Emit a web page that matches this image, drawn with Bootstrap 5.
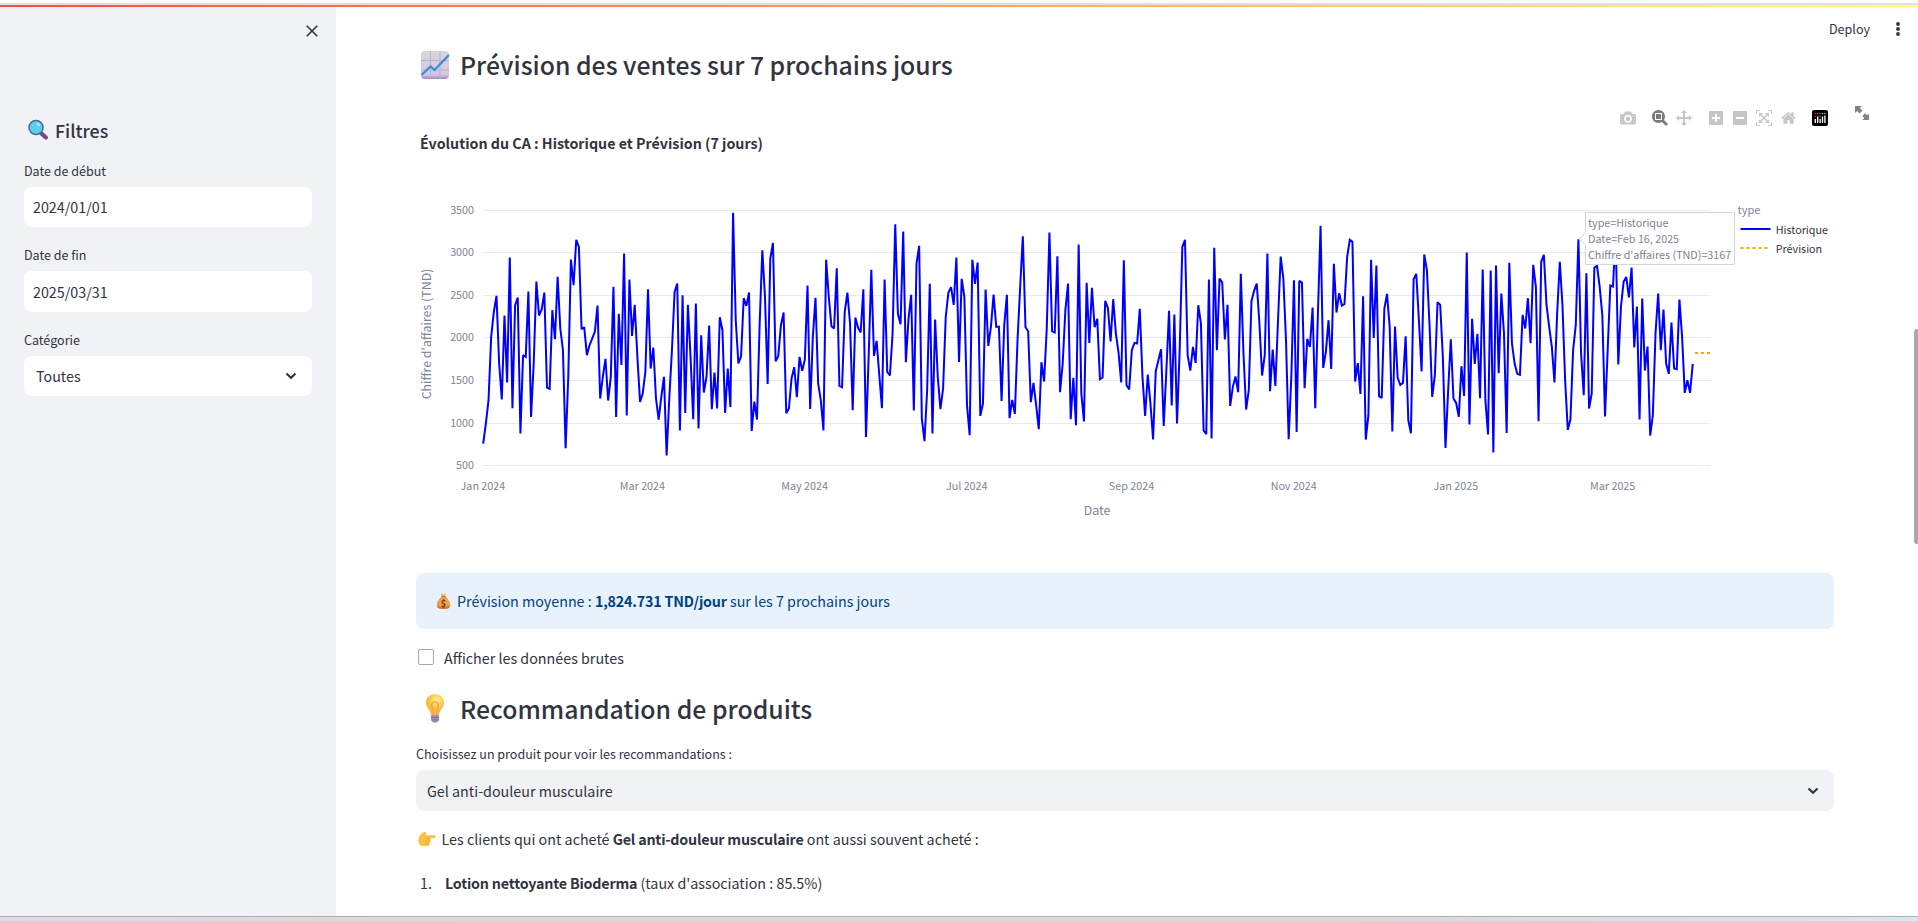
<!DOCTYPE html>
<html lang="fr">
<head>
<meta charset="utf-8">
<title>Prévision des ventes</title>
<link href="https://cdn.jsdelivr.net/npm/bootstrap@5.3.0/dist/css/bootstrap.min.css" rel="stylesheet">
<style>
  :root { --ink:#31333f; --panel:#f0f2f6; --axis:#808495; }
  body { font-family:"Noto Sans CJK JP","Noto Sans",sans-serif; font-size:14.3px; line-height:24px; color:var(--ink); height:921px; background:#fff; }
  .edge-top { height:7px; flex:none; background:linear-gradient(#fff 3px,#e0e0e0 3px,#e0e0e0 5px,transparent 5px),linear-gradient(90deg,#ff4b4b,#fffd80); }
  .edge-bottom { height:5px; flex:none; border-top:1px solid #adafb3; background:linear-gradient(90deg,#dcdce9,#dadada 25%,#d8dadb 70%,#dce6ef); }
  .side { width:336px; flex:none; background:var(--panel); padding:0 24px; }
  .side-top { height:111px; padding-top:18px; margin-right:-6px; }
  .content-col { padding:39px 84px 0 80px; min-width:0; }
  .side-title { font-size:17.8px; font-weight:500; gap:7px; margin-bottom:19px; padding-left:4px; }
  .lbl { font-size:12.52px; line-height:20px; }
  .field { height:40px; border-radius:8px; background:#fff; margin-top:6px; padding:0 9px; }
  .field.tall { height:41px; }
  .field.pick { padding:0 15px 0 12px; }
  .side .lbl + .field { margin-bottom:18px; }
  .title { font-size:24.8px; line-height:36px; font-weight:500; margin:0; }
  .title svg { width:36px; height:30px; margin-right:8px; flex:none; }
  .chart { height:491px; }
  .chart text { fill:var(--axis); }
  .chart text.dark { fill:var(--ink); }
  .modebar { top:28px; right:-35px; height:16px; }
  .modebar svg { display:block; fill:#444; opacity:.3; height:16px; }
  .modebar svg.on { opacity:.7; }
  .modebar svg.full { opacity:1; }
  .note { height:56px; border-radius:8px; background:#e8f2fc; color:#004280; padding:0 20px; }
  .tick { width:16px; height:16px; border:1px solid #a5a7ae; border-radius:2px; background:#fff; margin:0 10px 3px 2px; }
  .content-col .field { background:var(--panel); height:41px; margin-top:6px; padding-left:11px; }
  .topmenu { top:17px; right:18px; font-size:12.55px; }
  .thumb { right:0; top:329px; width:4px; height:215px; background:#a9a9ad; border-radius:3px 0 0 3px; }
  strong { font-weight:700; letter-spacing:-.21px; }
</style>
</head>
<body class="d-flex flex-column overflow-hidden position-relative">
<div class="edge-top"></div>
<div class="d-flex flex-grow-1 overflow-hidden">
  <aside class="side">
    <div class="side-top d-flex justify-content-end">
      <svg width="12" height="12" viewBox="0 0 12 12" stroke="#31333f" stroke-width="1.600" fill="none"><path d="M.7.7l10.600 10.600M11.300.7L.7 11.300"/></svg>
    </div>
    <div class="side-title d-flex align-items-center">
      <svg width="20" height="22" viewBox="0 0 20 22"><path d="M13.200 14.200l4.600 4.400" stroke="#7d4a86" stroke-width="4.200" stroke-linecap="round"/><circle cx="8" cy="8.500" r="7" fill="#60cdec" stroke="#3f6d9e" stroke-width="1.500"/><ellipse cx="10.500" cy="5.500" rx="1.400" ry="2.200" transform="rotate(-45 10.500 5.500)" fill="#9fe6f8"/></svg>
      <span>Filtres</span>
    </div>
    <div class="lbl" style="margin-top:19px">Date de début</div>
    <div class="field d-flex align-items-center">2024/01/01</div>
    <div class="lbl">Date de fin</div>
    <div class="field tall d-flex align-items-center">2025/03/31</div>
    <div class="lbl">Catégorie</div>
    <div class="field pick d-flex align-items-center justify-content-between"><span>Toutes</span>
      <svg width="12" height="8" viewBox="0 0 12 8" fill="none" stroke="#31333f" stroke-width="2.200"><path d="M1.500 1.500L6 5.800l4.500-4.300"/></svg></div>
  </aside>

  <main class="content-col flex-grow-1">
    <h2 class="title d-flex align-items-center">
      <svg viewBox="0 0 36 30"><defs><linearGradient id="g1" x2="0" y2="1"><stop stop-color="#d9d6df"/><stop offset=".85" stop-color="#d3c6e3"/><stop offset="1" stop-color="#a581c4"/></linearGradient></defs><rect x="5" y="2" width="28" height="28" rx="4" fill="url(#g1)"/><path d="M14.500 2v28M24 2v28M5 11.500h28M5 21h28" stroke="#b9b3c4" stroke-width="1"/><path d="M5.500 26l9-8.500 4 3.500L33 6" fill="none" stroke="#368fd8" stroke-width="2.200"/></svg>
      <span>Prévision des ventes sur 7 prochains jours</span>
    </h2>

    <section class="chart position-relative">
      <svg id="plot" class="d-block w-100 h-100" viewBox="416 82 1418 491" font-size="10.760">
        <text class="dark" x="420" y="149" font-size="14.250" font-weight="700">Évolution du CA : Historique et Prévision (7 jours)</text>
        <g id="grid" stroke="#e6eaf1"></g>
        <g id="xlabels" text-anchor="middle"></g>
        <text x="1097" y="515" text-anchor="middle" font-size="12.400">Date</text>
        <text transform="translate(430.500 334) rotate(-90)" text-anchor="middle" font-size="12.400">Chiffre d'affaires (TND)</text>
        <path id="history" fill="none" stroke="#00f" stroke-width="2" stroke-miterlimit="2"/>
        <path d="M1695 353H1711" stroke="orange" stroke-width="2" stroke-dasharray="3 3"/>
        <text x="1737.500" y="214" font-size="11">type</text>
        <path d="M1740.500 229H1770.500" stroke="#00f" stroke-width="2"/>
        <path d="M1740.500 248H1770.500" stroke="orange" stroke-width="2" stroke-dasharray="3 3"/>
        <text class="dark" x="1775.700" y="233.500">Historique</text>
        <text class="dark" x="1775.700" y="252.500">Prévision</text>
        <path d="M1579 239l6.500-6.500v-20h149v52h-149v-19.500z" fill="#fff" stroke="#d3d4d8"/>
        <text x="1588" y="226.800">type=Historique</text><text x="1588" y="242.800">Date=Feb 16, 2025</text><text x="1588" y="258.800">Chiffre d'affaires (TND)=3167</text>
      </svg>
      <div class="modebar position-absolute d-flex">
        <svg width="16" viewBox="0 0 1000 1000"><path transform="matrix(1 0 0 -1 0 850)" d="m500 450c-83 0-150-67-150-150 0-83 67-150 150-150 83 0 150 67 150 150 0 83-67 150-150 150z m400 150h-120c-16 0-34 13-39 29l-31 93c-6 15-23 28-40 28h-340c-16 0-34-13-39-28l-31-94c-6-15-23-28-40-28h-120c-55 0-100-45-100-100v-450c0-55 45-100 100-100h800c55 0 100 45 100 100v450c0 55-45 100-100 100z m-400-550c-138 0-250 112-250 250 0 138 112 250 250 250 138 0 250-112 250-250 0-138-112-250-250-250z m365 380c-19 0-35 16-35 35 0 19 16 35 35 35 19 0 35-16 35-35 0-19-16-35-35-35z"/></svg>
        <svg class="on ms-3" width="16" viewBox="0 0 1000 1000"><path transform="matrix(1 0 0 -1 0 850)" d="m1000-25l-250 251c40 63 63 138 63 218 0 224-182 406-407 406-224 0-406-182-406-406s183-406 407-406c80 0 155 22 218 62l250-250 125 125z m-812 250l0 438 437 0 0-438-437 0z m62 375l313 0 0-312-313 0 0 312z"/></svg>
        <svg class="ms-2" width="16" viewBox="0 0 1000 1000"><path transform="matrix(1 0 0 -1 0 850)" d="m1000 350l-187 188 0-125-250 0 0 250 125 0-188 187-187-187 125 0 0-250-250 0 0 125-188-188 186-187 0 125 252 0 0-250-125 0 187-188 188 188-125 0 0 250 250 0 0-126 187 188z"/></svg>
        <svg style="margin-left:17px" width="14" viewBox="0 0 875 1000"><path transform="matrix(1 0 0 -1 0 850)" d="m1 787l0-875 875 0 0 875-875 0z m687-500l-187 0 0-187-125 0 0 187-188 0 0 125 188 0 0 187 125 0 0-187 187 0 0-125z"/></svg>
        <svg style="margin-left:10px" width="14" viewBox="0 0 875 1000"><path transform="matrix(1 0 0 -1 0 850)" d="m0 788l0-876 875 0 0 876-875 0z m688-500l-500 0 0 125 500 0 0-125z"/></svg>
        <svg style="margin-left:9px" width="16" viewBox="0 0 1000 1000"><path transform="matrix(1 0 0 -1 0 850)" d="m250 850l-187 0-63 0 0-62 0-188 63 0 0 188 187 0 0 62z m688 0l-188 0 0-62 188 0 0-188 62 0 0 188 0 62-62 0z m-875-938l0 188-63 0 0-188 0-62 63 0 187 0 0 62-187 0z m875 188l0-188-188 0 0-62 188 0 62 0 0 62 0 188-62 0z m-125 188l-1 0-93-94-156 156 156 156 92-93 2 0 0 250-250 0 0-2 93-92-156-156-156 156 94 92 0 2-250 0 0-250 0 0 93 93 157-156-157-156-93 94 0 0 0-250 250 0 0 0-94 93 156 157 156-157-93-93 0 0 250 0 0 250z"/></svg>
        <svg style="margin-left:9px" width="15" viewBox="0 0 928.600 1000"><path transform="matrix(1 0 0 -1 0 850)" d="m786 296v-267q0-15-11-26t-25-10h-214v214h-143v-214h-214q-15 0-25 10t-11 26v267q0 1 0 2t0 2l321 264 321-264q1-1 1-4z m124 39l-34-41q-5-5-12-6h-2q-7 0-12 3l-386 322-386-322q-7-4-13-4-7 2-12 7l-35 41q-4 5-3 13t6 12l401 334q18 15 42 15t43-15l136-114v109q0 8 5 13t13 5h107q8 0 13-5t5-13v-227l122-102q5-5 6-12t-4-13z"/></svg>
        <svg class="full ms-3" width="16" viewBox="0 0 16 16"><rect width="16" height="16" rx="2" fill="#000"/><path d="M3.300 9v4M5.700 6.500v6.500M8.100 9v4M10.500 6.500v6.500M12.900 5.500v7.500" stroke="#fff" stroke-width="1.300"/><g fill="#e0306e"><circle cx="3.300" cy="3.500" r=".8"/><circle cx="3.300" cy="6.500" r=".8"/><circle cx="5.700" cy="3.500" r=".8"/></g><g fill="#b35b9a"><circle cx="8.100" cy="3.500" r=".8"/><circle cx="8.100" cy="6.500" r=".8"/></g><g fill="#6fc3e8"><circle cx="10.500" cy="3.500" r=".8"/><circle cx="12.900" cy="3.500" r=".8"/></g></svg>
        <svg class="full" style="margin:-5px 0 0 27px" width="14" viewBox="0 0 14 16"><path d="M0 1h7L4.900 3.100l2.500 2.500-2.800 2.800L2.100 5.900 0 8zM14 15H7.400l1.900-1.900-2-2 2.800-2.800 2 2L14 8.400z" fill="#7f838d"/></svg>
      </div>
    </section>

    <div class="note d-flex align-items-center">
      <svg width="15" height="18" viewBox="0 0 15 18" style="margin-right:6px"><path d="M5 1l2.500 1.200L10 1l-.8 3.800H5.800z" fill="#f3b64b"/><path d="M5.500 5h4c2.500 2 4.700 4.500 4.700 8 0 2.800-1.800 4-6.700 4S.8 15.800.8 13c0-3.500 2.200-6 4.700-8z" fill="#eda04b"/><path d="M1 13.500c.3 2.500 2 3.500 6.500 3.500s6.200-1 6.500-3.500c-2 1.700-11 1.700-13 0z" fill="#dd7136"/><path d="M5.200 4.800h4.600" stroke="#b3663a"/><text x="7.500" y="14.800" font-size="9" font-weight="700" text-anchor="middle" fill="#643a1e">$</text></svg>
      <span>Prévision moyenne : <strong>1,824.731 TND/jour</strong> sur les 7 prochains jours</span>
    </div>

    <div class="d-flex align-items-center" style="margin-top:17px;height:24px"><span class="tick"></span><span>Afficher les données brutes</span></div>

    <h2 class="title d-flex align-items-center" style="margin-top:20px">
      <svg viewBox="0 0 36 30"><defs><radialGradient id="g2" cx=".6" cy=".3"><stop stop-color="#fff0a0"/><stop offset=".6" stop-color="#fccf57"/><stop offset="1" stop-color="#f7b940"/></radialGradient></defs><path d="M19 1c5.200 0 9 3.800 9 8.700 0 5.300-4.500 6.500-5 12.300h-8c-.5-5.800-5-7-5-12.300C10 4.800 13.800 1 19 1z" fill="url(#g2)"/><path d="M17.500 22l-1-7.500a3.300 3.300 0 1 1 5 0l-1 7.500" fill="none" stroke="#f0a73c" stroke-width="1.200"/><path d="M15 22h8v5q-1.500 3-4 3t-4-3z" fill="#a990b8"/><path d="M15 24.500h8M15.500 27h7" stroke="#7d668f"/></svg>
      <span>Recommandation de produits</span>
    </h2>

    <div class="lbl" style="margin-top:18px">Choisissez un produit pour voir les recommandations :</div>
    <div class="field pick d-flex align-items-center justify-content-between"><span>Gel anti-douleur musculaire</span>
      <svg width="12" height="8" viewBox="0 0 12 8" fill="none" stroke="#31333f" stroke-width="2.200"><path d="M1.500 1.500L6 5.800l4.500-4.300"/></svg></div>

    <p class="mb-0 d-flex align-items-center" style="margin-top:16px">
      <svg width="18" height="16" viewBox="0 0 18 16" style="margin:0 5.500px 0 2px"><path d="M1 6c1-2.500 3.500-4 5-5 1.500-.8 3 .3 2 2L7.500 4.200H16c2 0 2 3 0 3h-4.500c1.800 0 1.700 2.800 0 2.800 1.400.3 1.200 2.600-.4 2.600.9.600.500 2.400-1.100 2.400H5c-3 0-4.600-2.500-4.600-5C.4 8.500.6 7 1 6z" fill="#fbc145"/><path d="M7.500 7.300h4M7.500 10.100h4M7.500 12.700H11" stroke="#e8952f" stroke-width=".8"/></svg>
      <span>Les clients qui ont acheté <strong>Gel anti-douleur musculaire</strong> ont aussi souvent acheté :</span></p>
    <div class="d-flex" style="margin-top:20px;padding-left:4px"><span style="width:25px">1.</span><span><strong>Lotion nettoyante Bioderma</strong> (taux d'association : 85.5%)</span></div>
  </main>
</div>
<div class="edge-bottom"></div>
<div class="topmenu position-absolute d-flex align-items-center"><span>Deploy</span>
  <svg width="4" height="16" viewBox="0 0 4 16" fill="#31333f" style="margin-left:26px"><circle cx="2" cy="3" r="1.900"/><circle cx="2" cy="8" r="1.900"/><circle cx="2" cy="13" r="1.900"/></svg></div>
<div class="thumb position-absolute"></div>

<script src="https://cdn.jsdelivr.net/npm/bootstrap@5.3.0/dist/js/bootstrap.bundle.min.js"></script>
<script>
  // Daily turnover, 1 Jan 2024 to 31 Mar 2025, as depth below the top of the plot (three units per pixel)
  const daily = [
    760,700,630,440,365,317,520,628,376,577,202,654,345,322,730,495,500,304,680,520,274,376,358,307,592,596,360,447,260,415,
    480,774,560,208,285,149,170,417,411,495,465,445,425,346,625,560,506,631,560,290,680,371,524,190,676,268,437,344,500,635,
    610,545,297,535,472,625,688,620,560,796,625,480,305,280,721,315,668,344,500,687,340,715,435,607,560,406,657,547,655,381,
    420,668,535,650,68,390,520,498,324,347,307,722,634,688,400,180,320,581,205,158,513,498,405,367,669,655,565,531,621,500,
    542,508,286,656,440,323,580,630,721,209,320,408,415,234,587,591,365,307,400,660,382,412,427,297,740,500,239,497,452,555,
    654,268,545,556,430,102,370,402,124,516,385,314,661,220,167,685,753,600,281,730,388,560,657,595,380,307,291,344,202,515,
    266,320,645,735,209,281,217,677,640,298,467,410,313,410,409,632,405,314,684,629,671,450,290,138,411,423,636,578,645,717,
    516,574,415,127,423,427,198,606,520,360,280,687,563,705,163,610,694,278,458,293,411,386,567,562,332,353,454,327,430,487,
    577,210,585,598,480,458,460,356,560,677,553,640,748,543,510,477,707,540,362,646,373,700,480,170,149,495,541,470,518,345,
    400,721,732,268,745,173,480,265,277,448,344,647,590,559,606,251,490,658,600,333,302,280,400,556,495,190,603,478,587,390,
    199,265,450,747,560,270,725,272,277,594,446,470,352,654,370,107,533,485,390,536,221,367,309,346,341,200,149,155,574,519,
    611,318,748,675,209,443,226,618,623,355,311,410,724,409,563,584,578,438,690,729,267,251,390,544,193,240,405,620,555,336,
    344,500,773,600,447,625,638,680,528,617,187,703,386,521,431,624,238,630,733,241,787,226,549,310,430,728,218,460,520,551,
    554,374,415,324,459,224,290,693,215,194,345,410,470,577,370,215,345,570,719,688,480,405,147,490,615,249,655,610,232,227,
    290,375,679,480,286,289,130,523,350,275,260,322,232,472,349,688,325,541,469,736,675,430,310,480,358,520,551,397,535,537,
    328,440,608,570,608,521
  ];
  const x = day => 483.2 + day * 2.6583;
  document.getElementById('history').setAttribute('d',
    'M' + daily.map((v, i) => x(i).toFixed(2) + ',' + (190.2 + v / 3).toFixed(2)).join('L'));
  document.getElementById('grid').innerHTML = [210, 252, 295, 337, 380, 423, 465].map((y, i) =>
    `<path d="M483 ${y + .5}H1711"/><text stroke="none" x="474" y="${y + 4.4}" text-anchor="end">${3500 - i * 500}</text>`).join('');
  document.getElementById('xlabels').innerHTML = [['Jan 2024', 0], ['Mar 2024', 60], ['May 2024', 121], ['Jul 2024', 182],
    ['Sep 2024', 244], ['Nov 2024', 305], ['Jan 2025', 366], ['Mar 2025', 425]].map(([t, d]) =>
    `<text x="${(x(d) - .3).toFixed(1)}" y="490.200">${t}</text>`).join('');
</script>
</body>
</html>
